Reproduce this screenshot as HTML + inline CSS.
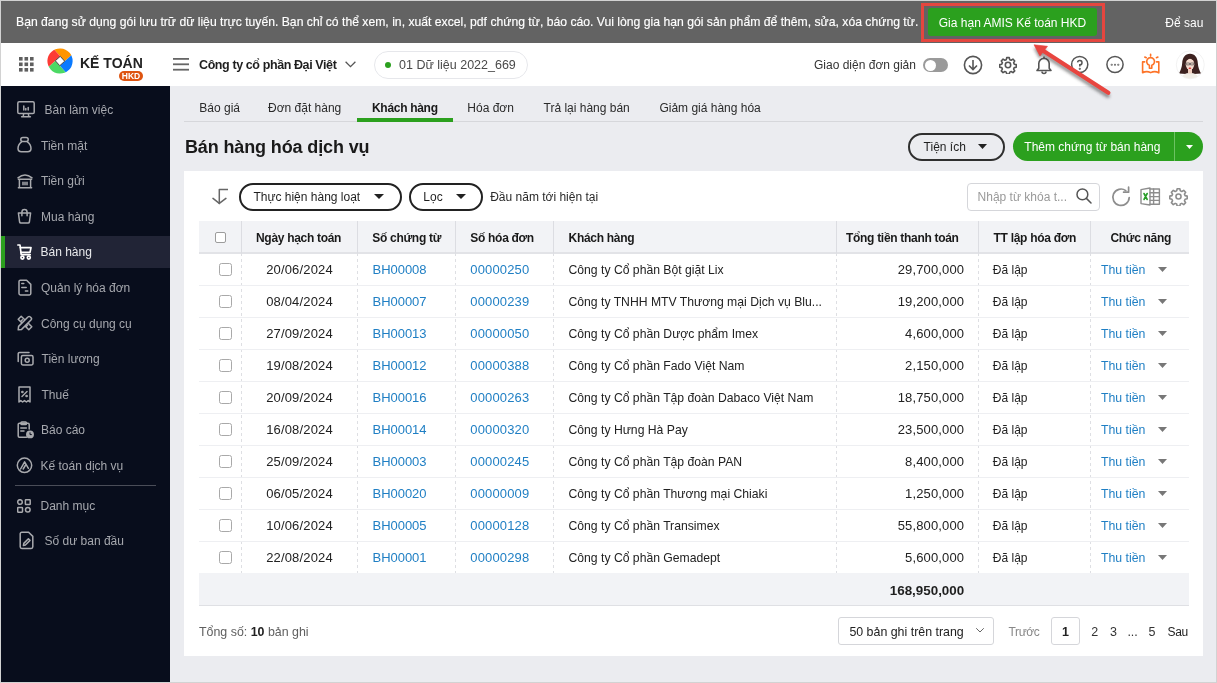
<!DOCTYPE html>
<html><head><meta charset="utf-8">
<style>
*{box-sizing:border-box;margin:0;padding:0}
html,body{width:1217px;height:683px;overflow:hidden;background:#ebecf0;font-family:"Liberation Sans",sans-serif;position:relative}
#root{position:absolute;left:0;top:0;width:1217px;height:683px;will-change:transform}
.a{position:absolute;white-space:nowrap;line-height:normal}
</style></head>
<body><div id="root">
<div class="a" style="left:0px;top:0px;width:1217px;height:43px;background:#636363"></div>
<div class="a" style="left:16px;top:15px;font-size:12.2px;color:#fff;-webkit-text-stroke:0.15px #fff">Bạn đang sử dụng gói lưu trữ dữ liệu trực tuyến. Bạn chỉ có thể xem, in, xuất excel, pdf chứng từ, báo cáo. Vui lòng gia hạn gói sản phẩm để thêm, sửa, xóa chứng từ.</div>
<div class="a" style="left:928px;top:8px;width:169px;height:28px;background:#2ba01e;border-radius:3px"></div>
<div class="a" style="left:862.5px;width:300px;text-align:center;top:15.5px;font-size:12px;color:#fff;">Gia hạn AMIS Kế toán HKD</div>
<div class="a" style="left:1165.3px;top:16px;font-size:12px;color:#fff;">Để sau</div>
<div class="a" style="left:921px;top:3px;width:184px;height:39px;border:3px solid #e5463f;z-index:20"></div>
<div class="a" style="left:0px;top:43px;width:1217px;height:43px;background:#fff"></div>
<svg class="a" style="left:19px;top:57px" width="15" height="15" viewBox="0 0 15 15" fill="#5f5f5f"><rect x="0" y="0" width="3.6" height="3.6"/><rect x="5.5" y="0" width="3.6" height="3.6"/><rect x="11" y="0" width="3.6" height="3.6"/><rect x="0" y="5.5" width="3.6" height="3.6"/><rect x="5.5" y="5.5" width="3.6" height="3.6"/><rect x="11" y="5.5" width="3.6" height="3.6"/><rect x="0" y="11" width="3.6" height="3.6"/><rect x="5.5" y="11" width="3.6" height="3.6"/><rect x="11" y="11" width="3.6" height="3.6"/></svg>
<svg class="a" style="left:47px;top:48px" width="26" height="26" viewBox="-13 -13 26 26">
    <defs><clipPath id="lc"><circle cx="0" cy="0" r="12.6"/></clipPath></defs>
    <g clip-path="url(#lc)" transform="rotate(3)">
      <path d="M0 -4.7 L-40 -44.7 L44.7 -40 L4.7 0 Z" fill="#ff9500"/>
      <path d="M4.7 0 L44.7 -40 L40 44.7 L0 4.7 Z" fill="#0a7aff"/>
      <path d="M0 4.7 L40 44.7 L-44.7 40 L-4.7 0 Z" fill="#4cd964"/>
      <path d="M-4.7 0 L-44.7 40 L-40 -44.7 L0 -4.7 Z" fill="#fd3b35"/>
      <path d="M0 -4.7 L4.7 0 L0 4.7 L-4.7 0 Z" fill="#fff" stroke="#333" stroke-width="0.9"/>
    </g></svg>
<div class="a" style="left:80px;top:55px;font-size:14px;color:#222;font-weight:bold;">KẾ TOÁN</div>
<div class="a" style="left:119px;top:71px;width:24px;height:9.5px;border-radius:5px;background:#de5410"></div>
<div class="a" style="left:-19px;width:300px;text-align:center;top:71px;font-size:8.5px;color:#fff;font-weight:bold;">HKD</div>
<svg class="a" style="left:173px;top:58px" width="16" height="13" viewBox="0 0 16 13" fill="#666"><rect x="0" y="0" width="16" height="1.8"/><rect x="0" y="5.4" width="16" height="1.8"/><rect x="0" y="10.8" width="16" height="1.8"/></svg>
<div class="a" style="left:199px;top:58px;font-size:12.5px;color:#1f1f1f;font-weight:bold;letter-spacing:-0.4px">Công ty cổ phần Đại Việt</div>
<svg class="a" style="left:345px;top:61px" width="11" height="7" viewBox="0 0 11 7"><path d="M0.6 0.8 L5.5 5.6 L10.4 0.8" fill="none" stroke="#555" stroke-width="1.3"/></svg>
<div class="a" style="left:373.5px;top:50.5px;width:154.5px;height:28px;border:1px solid #e6e7eb;border-radius:14px"></div>
<div class="a" style="left:384.7px;top:62px;width:6px;height:6px;border-radius:50%;background:#2ba01e"></div>
<div class="a" style="left:399px;top:58px;font-size:12.5px;color:#4a4a4a;">01 Dữ liệu 2022_669</div>
<div class="a" style="left:814px;top:58px;font-size:12px;color:#333;">Giao diện đơn giản</div>
<div class="a" style="left:923px;top:58px;width:25px;height:14px;border-radius:7px;background:#9a9a9a"></div>
<div class="a" style="left:924.5px;top:59.5px;width:11px;height:11px;border-radius:50%;background:#fff"></div>
<svg class="a" style="left:963px;top:55px" width="20" height="20" viewBox="0 0 20 20" fill="none" stroke="#555" stroke-width="1.6"><circle cx="10" cy="10" r="8.6"/><path d="M10 5 V14.5 M6 10.5 L10 14.5 L14 10.5"/></svg>
<svg class="a" style="left:999px;top:56px" width="18" height="18" viewBox="0 0 24 24" fill="none" stroke="#555" stroke-width="2.1" stroke-linejoin="round"><path d="M10.3 2.2h3.4l.6 2.7 1.9.8 2.4-1.5 2.4 2.4-1.5 2.4.8 1.9 2.7.6v3.4l-2.7.6-.8 1.9 1.5 2.4-2.4 2.4-2.4-1.5-1.9.8-.6 2.7h-3.4l-.6-2.7-1.9-.8-2.4 1.5-2.4-2.4 1.5-2.4-.8-1.9-2.7-.6v-3.4l2.7-.6.8-1.9-1.5-2.4 2.4-2.4 2.4 1.5 1.9-.8z"/><circle cx="12" cy="12" r="3.6"/></svg>
<svg class="a" style="left:1034px;top:55px" width="20" height="20" viewBox="0 0 20 20" fill="none" stroke="#555" stroke-width="1.6" stroke-linejoin="round"><path d="M3 15.5 H17 L15.2 13.2 V8.6 A5.2 5.2 0 0 0 4.8 8.6 V13.2 Z"/><path d="M8 16.5 A2 2 0 0 0 12 16.5"/><path d="M10 1.5 V3.4"/></svg>
<svg class="a" style="left:1070px;top:55px" width="20" height="20" viewBox="0 0 20 20" fill="none" stroke="#555" stroke-width="1.5"><circle cx="9.7" cy="9.5" r="8.1"/><path d="M7.6 7.4 A2.2 2.2 0 1 1 9.8 9.8 V11.4"/><circle cx="9.8" cy="13.8" r="0.35" fill="#555"/></svg>
<svg class="a" style="left:1105px;top:55px" width="20" height="20" viewBox="0 0 20 20" fill="none" stroke="#555" stroke-width="1.5"><circle cx="10" cy="9.5" r="8.1"/><circle cx="6.7" cy="9.8" r="0.3" fill="#555"/><circle cx="10" cy="9.8" r="0.3" fill="#555"/><circle cx="13.3" cy="9.8" r="0.3" fill="#555"/></svg>
<svg class="a" style="left:1141px;top:53px" width="20" height="22" viewBox="0 0 20 22" fill="none" stroke="#fd7328" stroke-width="1.6" stroke-linejoin="round" stroke-linecap="round">
    <path d="M3.6 8.9 H1.6 V19.8 Q5.6 17.6 9.7 19.6 Q13.8 17.6 17.8 19.8 V8.9 H15.6"/>
    <path d="M8.4 15.2 V12.2 A3.9 3.9 0 1 1 10.8 12.2 V15.2 Z"/><path d="M9.6 1.2 V3.1 M3.8 4 L5.3 4.7 M15.4 4.7 L16.9 4"/></svg>
<svg class="a" style="left:1175px;top:50px" width="30" height="30" viewBox="0 0 30 30">
    <defs><clipPath id="av"><circle cx="15.3" cy="14.8" r="13.8"/></clipPath></defs>
    <circle cx="15.3" cy="14.8" r="14" fill="#fff" stroke="#efefef" stroke-width="0.8"/>
    <g clip-path="url(#av)">
      <path d="M15 3.8 C20 3.8 22.6 8 22.8 13 C23 17 24.5 20.5 26 23.5 L19 24 L11 24 L4 23.5 C5.5 20.5 7 17 7.2 13 C7.5 8 10 3.8 15 3.8 Z" fill="#3d2220"/>
      <path d="M5 31 C6 25.5 10 23 15 23 C20 23 24 25.5 25 31 Z" fill="#f1ede6"/>
      <rect x="13" y="18.5" width="4" height="5" fill="#efcfc0"/>
      <ellipse cx="15" cy="14.3" rx="4.3" ry="5.6" fill="#f4dacd"/>
      <path d="M15 6.5 C12 6.8 10.6 9.5 10.7 11.5 C12 9.8 13.8 8.6 15 7.6 C16.2 8.6 18 9.8 19.3 11.5 C19.4 9.5 18 6.8 15 6.5 Z" fill="#3d2220"/>
      <path d="M10.9 13 H14.5 V14.9 H11.3 Z M15.5 13 H19.1 L18.7 14.9 H15.5 Z" fill="none" stroke="#4a4a4a" stroke-width="0.7"/>
      <ellipse cx="14.9" cy="18.3" rx="1.4" ry="0.7" fill="#d62b2b"/>
    </g></svg>
<div class="a" style="left:0px;top:86px;width:170px;height:597px;background:#080d1c"></div>
<svg class="a" style="left:17px;top:101px;" width="18" height="17" viewBox="0 0 18 17" fill="none" stroke="#a9aaae" stroke-width="1.5" stroke-linecap="round" stroke-linejoin="round"><rect x="0.8" y="0.8" width="16.4" height="11.8" rx="1.4"/><path d="M6.6 13 L6.2 15.6 M11.4 13 L11.8 15.6 M4.6 15.8 H13.4"/><path d="M6.8 5 V9 M8.8 7.4 V9 M11.2 6.4 V9" stroke-width="1.5"/></svg>
<div class="a" style="left:44.5px;top:103px;font-size:12px;color:#a6a8ae;">Bàn làm việc</div>
<svg class="a" style="left:17px;top:136px;" width="15" height="17" viewBox="0 0 15 17" fill="none" stroke="#a9aaae" stroke-width="1.5" stroke-linecap="round" stroke-linejoin="round"><rect x="3.8" y="1.4" width="7.4" height="4.2" rx="2.1"/><path d="M4.6 5.8 C2 7.6 1 10.2 1 12.6 C1 14.9 2.4 15.8 4.4 15.8 H10.6 C12.6 15.8 14 14.9 14 12.6 C14 10.2 13 7.6 10.4 5.8"/></svg>
<div class="a" style="left:41px;top:139px;font-size:12px;color:#a6a8ae;">Tiền mặt</div>
<svg class="a" style="left:17px;top:172px;" width="16" height="17" viewBox="0 0 16 17" fill="none" stroke="#a9aaae" stroke-width="1.5" stroke-linecap="round" stroke-linejoin="round"><path d="M1 5.8 Q8 0.4 15 5.8"/><path d="M1.4 7.2 H14.6 M1.4 15.8 H14.6 M2.4 7.2 V15.8 M13.6 7.2 V15.8 M6 10.2 V12.8 M8 10.2 V12.8 M10 10.2 V12.8"/></svg>
<div class="a" style="left:41px;top:174px;font-size:12px;color:#a6a8ae;">Tiền gửi</div>
<svg class="a" style="left:17px;top:208px;" width="15" height="16" viewBox="0 0 15 16" fill="none" stroke="#a9aaae" stroke-width="1.5" stroke-linecap="round" stroke-linejoin="round"><path d="M1.4 5 H13.6 L12.4 14 Q12.2 15 11.1 15 H3.9 Q2.8 15 2.6 14 Z"/><path d="M4.9 7.8 V4.2 A2.6 2.6 0 0 1 10.1 4.2 V7.8"/></svg>
<div class="a" style="left:41px;top:210px;font-size:12px;color:#a6a8ae;">Mua hàng</div>
<div class="a" style="left:1px;top:236px;width:169px;height:32px;background:#212436"></div>
<div class="a" style="left:1px;top:236px;width:4px;height:32px;background:#2ba01e"></div>
<svg class="a" style="left:17px;top:244px;" width="15" height="16" viewBox="0 0 15 16" fill="none" stroke="#fff" stroke-width="1.7" stroke-linecap="round" stroke-linejoin="round"><path d="M0.8 1 H3 L4.2 10.6 H13.2"/><path d="M3.4 3.6 H14 L13 8.4 H4"/><circle cx="5.4" cy="13.6" r="1.5"/><circle cx="11.8" cy="13.6" r="1.5"/></svg>
<div class="a" style="left:40.5px;top:245px;font-size:12px;color:#e8e9ec;">Bán hàng</div>
<svg class="a" style="left:18px;top:279px;" width="14" height="17" viewBox="0 0 14 17" fill="none" stroke="#a9aaae" stroke-width="1.5" stroke-linecap="round" stroke-linejoin="round"><path d="M2.4 1.2 H8.6 L12.8 5.4 V14.6 A1.4 1.4 0 0 1 11.4 16 H2.4 A1.4 1.4 0 0 1 1 14.6 V2.6 A1.4 1.4 0 0 1 2.4 1.2 Z"/><path d="M3.8 4.6 H5.8 M3.8 8.6 H8.2 M7.4 12 H9.8"/></svg>
<div class="a" style="left:41px;top:281px;font-size:12px;color:#a6a8ae;">Quản lý hóa đơn</div>
<svg class="a" style="left:17px;top:315px;" width="16" height="16" viewBox="0 0 16 16" fill="none" stroke="#a9aaae" stroke-width="1.5" stroke-linecap="round" stroke-linejoin="round"><path d="M4.2 1.2 L1.2 4.2 L11.8 14.8 L14.8 11.8 Z"/><path d="M4 6.2 L5.4 4.8 M9.2 11.4 L10.6 10"/><path d="M1.2 14.8 L1.6 11.4 L11.2 1.8 A1.3 1.3 0 0 1 13.1 1.8 L14.2 2.9 A1.3 1.3 0 0 1 14.2 4.8 L4.6 14.4 Z" fill="#080d1c"/></svg>
<div class="a" style="left:41px;top:317px;font-size:12px;color:#a6a8ae;">Công cụ dụng cụ</div>
<svg class="a" style="left:17px;top:351px;" width="17" height="15" viewBox="0 0 17 15" fill="none" stroke="#a9aaae" stroke-width="1.5" stroke-linecap="round" stroke-linejoin="round"><rect x="4.4" y="4.6" width="11.6" height="9.4" rx="1.4"/><path d="M1.2 10.6 V2.8 A1.4 1.4 0 0 1 2.6 1.4 H12"/><circle cx="10.2" cy="9.3" r="2"/></svg>
<div class="a" style="left:41.5px;top:352px;font-size:12px;color:#a6a8ae;">Tiền lương</div>
<svg class="a" style="left:18px;top:386px;" width="13" height="17" viewBox="0 0 13 17" fill="none" stroke="#a9aaae" stroke-width="1.5" stroke-linecap="round" stroke-linejoin="round"><path d="M1 1 H12 V16 L10.2 14.6 L8.4 16 L6.5 14.6 L4.6 16 L2.8 14.6 L1 16 Z"/><path d="M4 10.5 L9 5.5"/><circle cx="4.4" cy="6" r="0.6"/><circle cx="8.6" cy="10" r="0.6"/></svg>
<div class="a" style="left:41.5px;top:388px;font-size:12px;color:#a6a8ae;">Thuế</div>
<svg class="a" style="left:17px;top:421px;" width="17" height="18" viewBox="0 0 17 18" fill="none" stroke="#a9aaae" stroke-width="1.5" stroke-linecap="round" stroke-linejoin="round"><path d="M9.5 16.2 H2.4 A1.2 1.2 0 0 1 1.2 15 V3.4 A1.2 1.2 0 0 1 2.4 2.2 H11 A1.2 1.2 0 0 1 12.2 3.4 V8"/><rect x="4" y="0.9" width="5.4" height="2.6" rx="0.8"/><path d="M3.8 7 H9.4 M3.8 10 H7"/><circle cx="13" cy="13.4" r="3.2" fill="#a9aaae"/><path d="M13 11.8 V13.6 H14.4" stroke="#080d1c" stroke-width="1"/></svg>
<div class="a" style="left:41px;top:423px;font-size:12px;color:#a6a8ae;">Báo cáo</div>
<svg class="a" style="left:16px;top:457px;" width="17" height="17" viewBox="0 0 17 17" fill="none" stroke="#a9aaae" stroke-width="1.5" stroke-linecap="round" stroke-linejoin="round"><circle cx="8.5" cy="8.3" r="7.2"/><path d="M4.6 12 L8.6 4.8 L12.4 11.4 M7.2 12 L9.6 8"/></svg>
<div class="a" style="left:40.5px;top:459px;font-size:12px;color:#a6a8ae;">Kế toán dịch vụ</div>
<svg class="a" style="left:17px;top:499px;" width="14" height="14" viewBox="0 0 14 14" fill="none" stroke="#a9aaae" stroke-width="1.5" stroke-linecap="round" stroke-linejoin="round"><circle cx="3" cy="3" r="2.3"/><rect x="8.4" y="0.7" width="4.8" height="4.8" rx="0.6"/><rect x="0.7" y="8.4" width="4.8" height="4.8" rx="0.6"/><circle cx="10.8" cy="10.8" r="2.3"/></svg>
<div class="a" style="left:40.5px;top:499px;font-size:12px;color:#a6a8ae;">Danh mục</div>
<svg class="a" style="left:19px;top:531px;" width="15" height="19" viewBox="0 0 15 19" fill="none" stroke="#a9aaae" stroke-width="1.5" stroke-linecap="round" stroke-linejoin="round"><path d="M2.8 1.2 H9.6 L13.8 5.4 V15.8 A1.6 1.6 0 0 1 12.2 17.4 H2.8 A1.6 1.6 0 0 1 1.2 15.8 V2.8 A1.6 1.6 0 0 1 2.8 1.2 Z"/><path d="M4.4 14.6 L4.8 12.4 L9.4 7.8 L11 9.4 L6.4 14 Z"/></svg>
<div class="a" style="left:44.5px;top:534px;font-size:12px;color:#a6a8ae;">Số dư ban đầu</div>
<div class="a" style="left:15px;top:485px;width:141px;height:1px;background:#4a4d58"></div>
<div class="a" style="left:184px;top:121px;width:1019px;height:1px;background:#d6d7db"></div>
<div class="a" style="left:357px;top:118px;width:96px;height:3.6px;background:#2ba01e"></div>
<div class="a" style="left:199.3px;top:101px;font-size:12px;color:#2a2a2a;">Báo giá</div>
<div class="a" style="left:268px;top:101px;font-size:12px;color:#2a2a2a;">Đơn đặt hàng</div>
<div class="a" style="left:372px;top:101px;font-size:12px;color:#1a1a1a;font-weight:bold;letter-spacing:-0.3px">Khách hàng</div>
<div class="a" style="left:467.3px;top:101px;font-size:12px;color:#2a2a2a;">Hóa đơn</div>
<div class="a" style="left:543.5px;top:101px;font-size:12px;color:#2a2a2a;">Trả lại hàng bán</div>
<div class="a" style="left:659.4px;top:101px;font-size:12px;color:#2a2a2a;">Giảm giá hàng hóa</div>
<div class="a" style="left:185px;top:137px;font-size:18px;color:#1a1a1a;font-weight:bold;letter-spacing:-0.13px">Bán hàng hóa dịch vụ</div>
<div class="a" style="left:908px;top:133px;width:97px;height:28px;border:2px solid #2f2f2f;border-radius:14px"></div>
<div class="a" style="left:923.6px;top:140px;font-size:12px;color:#1f1f1f;">Tiện ích</div>
<svg class="a" style="left:978px;top:144px;" width="9" height="5" viewBox="0 0 9 5" fill="#222" stroke="none" stroke-width="1.5" stroke-linecap="round" stroke-linejoin="round"><path d="M0 0 H9 L4.5 5 Z"/></svg>
<div class="a" style="left:1013px;top:132px;width:190px;height:29px;background:#2ba01e;border-radius:15px"></div>
<div class="a" style="left:1174px;top:132px;width:1px;height:29px;background:#6cc262"></div>
<div class="a" style="left:1024.3px;top:140px;font-size:12px;color:#fff;">Thêm chứng từ bán hàng</div>
<svg class="a" style="left:1185.5px;top:145px;" width="7" height="4" viewBox="0 0 7 4" fill="#fff" stroke="none" stroke-width="1.5" stroke-linecap="round" stroke-linejoin="round"><path d="M0 0 H7 L3.5 4 Z"/></svg>
<div class="a" style="left:184px;top:171px;width:1019px;height:485px;background:#fff"></div>
<svg class="a" style="left:212px;top:188px;" width="16" height="17" viewBox="0 0 16 17" fill="none" stroke="#666" stroke-width="1.5" stroke-linecap="round" stroke-linejoin="round"><path d="M7.3 15.4 V1.5 H15.8"/><path d="M1 10.4 L7.3 15.4 L13.9 10.4"/></svg>
<div class="a" style="left:238.5px;top:182.5px;width:163px;height:28px;border:2px solid #222;border-radius:14px"></div>
<div class="a" style="left:253.4px;top:190px;font-size:12px;color:#1f1f1f;">Thực hiện hàng loạt</div>
<svg class="a" style="left:374px;top:194px;" width="10" height="5" viewBox="0 0 10 5" fill="#222" stroke="none" stroke-width="1.5" stroke-linecap="round" stroke-linejoin="round"><path d="M0 0 H10 L5 5 Z"/></svg>
<div class="a" style="left:409px;top:182.5px;width:73.5px;height:28px;border:2px solid #222;border-radius:14px"></div>
<div class="a" style="left:423.3px;top:190px;font-size:12px;color:#1f1f1f;">Lọc</div>
<svg class="a" style="left:455.5px;top:194px;" width="10" height="5" viewBox="0 0 10 5" fill="#222" stroke="none" stroke-width="1.5" stroke-linecap="round" stroke-linejoin="round"><path d="M0 0 H10 L5 5 Z"/></svg>
<div class="a" style="left:490.2px;top:190px;font-size:12px;color:#2a2a2a;">Đầu năm tới hiện tại</div>
<div class="a" style="left:967px;top:182.5px;width:133px;height:28.5px;border:1px solid #d5d6da;border-radius:4px"></div>
<div class="a" style="left:977.6px;top:190px;font-size:12px;color:#9a9a9a;">Nhập từ khóa t...</div>
<svg class="a" style="left:1076px;top:188px;" width="16" height="16" viewBox="0 0 16 16" fill="none" stroke="#555" stroke-width="1.5" stroke-linecap="round" stroke-linejoin="round"><circle cx="6.4" cy="6.4" r="5.4"/><path d="M10.4 10.4 L15 15"/></svg>
<svg class="a" style="left:1110px;top:186px;" width="22" height="22" viewBox="0 0 22 22" fill="none" stroke="#8d8d8d" stroke-width="1.7" stroke-linecap="round" stroke-linejoin="round"><path d="M19.2 11.5 A8.2 8.2 0 1 1 15.8 4.6"/><path d="M18.6 1.2 V6.2 H13.6"/></svg>
<svg class="a" style="left:1140px;top:187px;" width="21" height="19" viewBox="0 0 21 19" fill="none" stroke="#8d8d8d" stroke-width="1.4" stroke-linecap="round" stroke-linejoin="round"><path d="M1 2.6 L10 1 V18 L1 16.6 Z"/><path d="M10 2 H19.4 V17.2 H10"/><path d="M10 5.8 H19.4 M10 9.6 H19.4 M10 13.4 H19.4 M13.6 2 V17.2"/><path d="M4 6.5 L7.2 12.5 M7.2 6.5 L4 12.5" stroke="#2a9d2a" stroke-width="1.6"/></svg>
<svg class="a" style="left:1169px;top:187px;" width="19" height="19" viewBox="0 0 24 24" fill="none" stroke="#8d8d8d" stroke-width="2" stroke-linecap="round" stroke-linejoin="round"><path d="M10.3 2.2h3.4l.6 2.7 1.9.8 2.4-1.5 2.4 2.4-1.5 2.4.8 1.9 2.7.6v3.4l-2.7.6-.8 1.9 1.5 2.4-2.4 2.4-2.4-1.5-1.9.8-.6 2.7h-3.4l-.6-2.7-1.9-.8-2.4 1.5-2.4-2.4 1.5-2.4-.8-1.9-2.7-.6v-3.4l2.7-.6.8-1.9-1.5-2.4 2.4-2.4 2.4 1.5 1.9-.8z"/><circle cx="12" cy="12" r="3.2"/></svg>
<div class="a" style="left:199px;top:221px;width:990px;height:32px;background:#f2f3f6"></div>
<div class="a" style="left:199px;top:252px;width:990px;height:1.5px;background:#e2e3e7"></div>
<div class="a" style="left:241.0px;top:221px;width:1px;height:32px;background:#dcdde2"></div>
<div class="a" style="left:241.0px;top:253px;width:1px;height:320px;background-image:linear-gradient(#dedfe3 55%,transparent 55%);background-size:1px 6px"></div>
<div class="a" style="left:357.0px;top:221px;width:1px;height:32px;background:#dcdde2"></div>
<div class="a" style="left:357.0px;top:253px;width:1px;height:320px;background-image:linear-gradient(#dedfe3 55%,transparent 55%);background-size:1px 6px"></div>
<div class="a" style="left:455.0px;top:221px;width:1px;height:32px;background:#dcdde2"></div>
<div class="a" style="left:455.0px;top:253px;width:1px;height:320px;background-image:linear-gradient(#dedfe3 55%,transparent 55%);background-size:1px 6px"></div>
<div class="a" style="left:553.0px;top:221px;width:1px;height:32px;background:#dcdde2"></div>
<div class="a" style="left:553.0px;top:253px;width:1px;height:320px;background-image:linear-gradient(#dedfe3 55%,transparent 55%);background-size:1px 6px"></div>
<div class="a" style="left:835.8px;top:221px;width:1px;height:32px;background:#dcdde2"></div>
<div class="a" style="left:835.8px;top:253px;width:1px;height:320px;background-image:linear-gradient(#dedfe3 55%,transparent 55%);background-size:1px 6px"></div>
<div class="a" style="left:978.2px;top:221px;width:1px;height:32px;background:#dcdde2"></div>
<div class="a" style="left:978.2px;top:253px;width:1px;height:320px;background-image:linear-gradient(#dedfe3 55%,transparent 55%);background-size:1px 6px"></div>
<div class="a" style="left:1090.3px;top:221px;width:1px;height:32px;background:#dcdde2"></div>
<div class="a" style="left:1090.3px;top:253px;width:1px;height:320px;background-image:linear-gradient(#dedfe3 55%,transparent 55%);background-size:1px 6px"></div>
<div class="a" style="left:215px;top:232px;width:11px;height:11px;border:1px solid #9c9c9c;border-radius:2px;background:#fff"></div>
<div class="a" style="left:256px;top:231px;font-size:12px;color:#1a1a1a;font-weight:bold;letter-spacing:-0.3px">Ngày hạch toán</div>
<div class="a" style="left:372.3px;top:231px;font-size:12px;color:#1a1a1a;font-weight:bold;letter-spacing:-0.3px">Số chứng từ</div>
<div class="a" style="left:470.3px;top:231px;font-size:12px;color:#1a1a1a;font-weight:bold;letter-spacing:-0.3px">Số hóa đơn</div>
<div class="a" style="left:568.6px;top:231px;font-size:12px;color:#1a1a1a;font-weight:bold;letter-spacing:-0.3px">Khách hàng</div>
<div class="a" style="left:846px;top:231px;font-size:12px;color:#1a1a1a;font-weight:bold;letter-spacing:-0.3px">Tổng tiền thanh toán</div>
<div class="a" style="left:993.6px;top:231px;font-size:12px;color:#1a1a1a;font-weight:bold;letter-spacing:-0.3px">TT lập hóa đơn</div>
<div class="a" style="left:1110.4px;top:231px;font-size:12px;color:#1a1a1a;font-weight:bold;letter-spacing:-0.3px">Chức năng</div>
<div class="a" style="left:199px;top:284.5px;width:990px;height:1px;background:#eeeff2"></div>
<div class="a" style="left:219px;top:263px;width:13px;height:13px;border:1.5px solid #a9a9a9;border-radius:2.5px"></div>
<div class="a" style="left:149.5px;width:300px;text-align:center;top:262px;font-size:13px;color:#222;letter-spacing:0.15px">20/06/2024</div>
<div class="a" style="left:372.6px;top:262px;font-size:13px;color:#1f7fc4;letter-spacing:-0.05px">BH00008</div>
<div class="a" style="left:470.3px;top:262px;font-size:13px;color:#1f7fc4;letter-spacing:0.15px">00000250</div>
<div class="a" style="left:568.5px;top:263px;font-size:12.2px;color:#222;">Công ty Cổ phần Bột giặt Lix</div>
<div class="a" style="right:252.79999999999995px;top:262px;font-size:13px;color:#222;letter-spacing:0.15px">29,700,000</div>
<div class="a" style="left:992.8px;top:263px;font-size:12px;color:#222;">Đã lập</div>
<div class="a" style="left:1100.9px;top:263px;font-size:12.3px;color:#1f7fc4;">Thu tiền</div>
<svg class="a" style="left:1158px;top:267px;" width="9" height="5" viewBox="0 0 9 5" fill="#777" stroke="none" stroke-width="1.5" stroke-linecap="round" stroke-linejoin="round"><path d="M0 0 H9 L4.5 5 Z"/></svg>
<div class="a" style="left:199px;top:316.5px;width:990px;height:1px;background:#eeeff2"></div>
<div class="a" style="left:219px;top:295px;width:13px;height:13px;border:1.5px solid #a9a9a9;border-radius:2.5px"></div>
<div class="a" style="left:149.5px;width:300px;text-align:center;top:294px;font-size:13px;color:#222;letter-spacing:0.15px">08/04/2024</div>
<div class="a" style="left:372.6px;top:294px;font-size:13px;color:#1f7fc4;letter-spacing:-0.05px">BH00007</div>
<div class="a" style="left:470.3px;top:294px;font-size:13px;color:#1f7fc4;letter-spacing:0.15px">00000239</div>
<div class="a" style="left:568.5px;top:295px;font-size:12.2px;color:#222;">Công ty TNHH MTV Thương mại Dịch vụ Blu...</div>
<div class="a" style="right:252.79999999999995px;top:294px;font-size:13px;color:#222;letter-spacing:0.15px">19,200,000</div>
<div class="a" style="left:992.8px;top:295px;font-size:12px;color:#222;">Đã lập</div>
<div class="a" style="left:1100.9px;top:295px;font-size:12.3px;color:#1f7fc4;">Thu tiền</div>
<svg class="a" style="left:1158px;top:299px;" width="9" height="5" viewBox="0 0 9 5" fill="#777" stroke="none" stroke-width="1.5" stroke-linecap="round" stroke-linejoin="round"><path d="M0 0 H9 L4.5 5 Z"/></svg>
<div class="a" style="left:199px;top:348.5px;width:990px;height:1px;background:#eeeff2"></div>
<div class="a" style="left:219px;top:327px;width:13px;height:13px;border:1.5px solid #a9a9a9;border-radius:2.5px"></div>
<div class="a" style="left:149.5px;width:300px;text-align:center;top:326px;font-size:13px;color:#222;letter-spacing:0.15px">27/09/2024</div>
<div class="a" style="left:372.6px;top:326px;font-size:13px;color:#1f7fc4;letter-spacing:-0.05px">BH00013</div>
<div class="a" style="left:470.3px;top:326px;font-size:13px;color:#1f7fc4;letter-spacing:0.15px">00000050</div>
<div class="a" style="left:568.5px;top:327px;font-size:12.2px;color:#222;">Công ty Cổ phần Dược phẩm Imex</div>
<div class="a" style="right:252.79999999999995px;top:326px;font-size:13px;color:#222;letter-spacing:0.15px">4,600,000</div>
<div class="a" style="left:992.8px;top:327px;font-size:12px;color:#222;">Đã lập</div>
<div class="a" style="left:1100.9px;top:327px;font-size:12.3px;color:#1f7fc4;">Thu tiền</div>
<svg class="a" style="left:1158px;top:331px;" width="9" height="5" viewBox="0 0 9 5" fill="#777" stroke="none" stroke-width="1.5" stroke-linecap="round" stroke-linejoin="round"><path d="M0 0 H9 L4.5 5 Z"/></svg>
<div class="a" style="left:199px;top:380.5px;width:990px;height:1px;background:#eeeff2"></div>
<div class="a" style="left:219px;top:359px;width:13px;height:13px;border:1.5px solid #a9a9a9;border-radius:2.5px"></div>
<div class="a" style="left:149.5px;width:300px;text-align:center;top:358px;font-size:13px;color:#222;letter-spacing:0.15px">19/08/2024</div>
<div class="a" style="left:372.6px;top:358px;font-size:13px;color:#1f7fc4;letter-spacing:-0.05px">BH00012</div>
<div class="a" style="left:470.3px;top:358px;font-size:13px;color:#1f7fc4;letter-spacing:0.15px">00000388</div>
<div class="a" style="left:568.5px;top:359px;font-size:12.2px;color:#222;">Công ty Cổ phần Fado Việt Nam</div>
<div class="a" style="right:252.79999999999995px;top:358px;font-size:13px;color:#222;letter-spacing:0.15px">2,150,000</div>
<div class="a" style="left:992.8px;top:359px;font-size:12px;color:#222;">Đã lập</div>
<div class="a" style="left:1100.9px;top:359px;font-size:12.3px;color:#1f7fc4;">Thu tiền</div>
<svg class="a" style="left:1158px;top:363px;" width="9" height="5" viewBox="0 0 9 5" fill="#777" stroke="none" stroke-width="1.5" stroke-linecap="round" stroke-linejoin="round"><path d="M0 0 H9 L4.5 5 Z"/></svg>
<div class="a" style="left:199px;top:412.5px;width:990px;height:1px;background:#eeeff2"></div>
<div class="a" style="left:219px;top:391px;width:13px;height:13px;border:1.5px solid #a9a9a9;border-radius:2.5px"></div>
<div class="a" style="left:149.5px;width:300px;text-align:center;top:390px;font-size:13px;color:#222;letter-spacing:0.15px">20/09/2024</div>
<div class="a" style="left:372.6px;top:390px;font-size:13px;color:#1f7fc4;letter-spacing:-0.05px">BH00016</div>
<div class="a" style="left:470.3px;top:390px;font-size:13px;color:#1f7fc4;letter-spacing:0.15px">00000263</div>
<div class="a" style="left:568.5px;top:391px;font-size:12.2px;color:#222;">Công ty Cổ phần Tập đoàn Dabaco Việt Nam</div>
<div class="a" style="right:252.79999999999995px;top:390px;font-size:13px;color:#222;letter-spacing:0.15px">18,750,000</div>
<div class="a" style="left:992.8px;top:391px;font-size:12px;color:#222;">Đã lập</div>
<div class="a" style="left:1100.9px;top:391px;font-size:12.3px;color:#1f7fc4;">Thu tiền</div>
<svg class="a" style="left:1158px;top:395px;" width="9" height="5" viewBox="0 0 9 5" fill="#777" stroke="none" stroke-width="1.5" stroke-linecap="round" stroke-linejoin="round"><path d="M0 0 H9 L4.5 5 Z"/></svg>
<div class="a" style="left:199px;top:444.5px;width:990px;height:1px;background:#eeeff2"></div>
<div class="a" style="left:219px;top:423px;width:13px;height:13px;border:1.5px solid #a9a9a9;border-radius:2.5px"></div>
<div class="a" style="left:149.5px;width:300px;text-align:center;top:422px;font-size:13px;color:#222;letter-spacing:0.15px">16/08/2024</div>
<div class="a" style="left:372.6px;top:422px;font-size:13px;color:#1f7fc4;letter-spacing:-0.05px">BH00014</div>
<div class="a" style="left:470.3px;top:422px;font-size:13px;color:#1f7fc4;letter-spacing:0.15px">00000320</div>
<div class="a" style="left:568.5px;top:423px;font-size:12.2px;color:#222;">Công ty Hưng Hà Pay</div>
<div class="a" style="right:252.79999999999995px;top:422px;font-size:13px;color:#222;letter-spacing:0.15px">23,500,000</div>
<div class="a" style="left:992.8px;top:423px;font-size:12px;color:#222;">Đã lập</div>
<div class="a" style="left:1100.9px;top:423px;font-size:12.3px;color:#1f7fc4;">Thu tiền</div>
<svg class="a" style="left:1158px;top:427px;" width="9" height="5" viewBox="0 0 9 5" fill="#777" stroke="none" stroke-width="1.5" stroke-linecap="round" stroke-linejoin="round"><path d="M0 0 H9 L4.5 5 Z"/></svg>
<div class="a" style="left:199px;top:476.5px;width:990px;height:1px;background:#eeeff2"></div>
<div class="a" style="left:219px;top:455px;width:13px;height:13px;border:1.5px solid #a9a9a9;border-radius:2.5px"></div>
<div class="a" style="left:149.5px;width:300px;text-align:center;top:454px;font-size:13px;color:#222;letter-spacing:0.15px">25/09/2024</div>
<div class="a" style="left:372.6px;top:454px;font-size:13px;color:#1f7fc4;letter-spacing:-0.05px">BH00003</div>
<div class="a" style="left:470.3px;top:454px;font-size:13px;color:#1f7fc4;letter-spacing:0.15px">00000245</div>
<div class="a" style="left:568.5px;top:455px;font-size:12.2px;color:#222;">Công ty Cổ phần Tập đoàn PAN</div>
<div class="a" style="right:252.79999999999995px;top:454px;font-size:13px;color:#222;letter-spacing:0.15px">8,400,000</div>
<div class="a" style="left:992.8px;top:455px;font-size:12px;color:#222;">Đã lập</div>
<div class="a" style="left:1100.9px;top:455px;font-size:12.3px;color:#1f7fc4;">Thu tiền</div>
<svg class="a" style="left:1158px;top:459px;" width="9" height="5" viewBox="0 0 9 5" fill="#777" stroke="none" stroke-width="1.5" stroke-linecap="round" stroke-linejoin="round"><path d="M0 0 H9 L4.5 5 Z"/></svg>
<div class="a" style="left:199px;top:508.5px;width:990px;height:1px;background:#eeeff2"></div>
<div class="a" style="left:219px;top:487px;width:13px;height:13px;border:1.5px solid #a9a9a9;border-radius:2.5px"></div>
<div class="a" style="left:149.5px;width:300px;text-align:center;top:486px;font-size:13px;color:#222;letter-spacing:0.15px">06/05/2024</div>
<div class="a" style="left:372.6px;top:486px;font-size:13px;color:#1f7fc4;letter-spacing:-0.05px">BH00020</div>
<div class="a" style="left:470.3px;top:486px;font-size:13px;color:#1f7fc4;letter-spacing:0.15px">00000009</div>
<div class="a" style="left:568.5px;top:487px;font-size:12.2px;color:#222;">Công ty Cổ phần Thương mại Chiaki</div>
<div class="a" style="right:252.79999999999995px;top:486px;font-size:13px;color:#222;letter-spacing:0.15px">1,250,000</div>
<div class="a" style="left:992.8px;top:487px;font-size:12px;color:#222;">Đã lập</div>
<div class="a" style="left:1100.9px;top:487px;font-size:12.3px;color:#1f7fc4;">Thu tiền</div>
<svg class="a" style="left:1158px;top:491px;" width="9" height="5" viewBox="0 0 9 5" fill="#777" stroke="none" stroke-width="1.5" stroke-linecap="round" stroke-linejoin="round"><path d="M0 0 H9 L4.5 5 Z"/></svg>
<div class="a" style="left:199px;top:540.5px;width:990px;height:1px;background:#eeeff2"></div>
<div class="a" style="left:219px;top:519px;width:13px;height:13px;border:1.5px solid #a9a9a9;border-radius:2.5px"></div>
<div class="a" style="left:149.5px;width:300px;text-align:center;top:518px;font-size:13px;color:#222;letter-spacing:0.15px">10/06/2024</div>
<div class="a" style="left:372.6px;top:518px;font-size:13px;color:#1f7fc4;letter-spacing:-0.05px">BH00005</div>
<div class="a" style="left:470.3px;top:518px;font-size:13px;color:#1f7fc4;letter-spacing:0.15px">00000128</div>
<div class="a" style="left:568.5px;top:519px;font-size:12.2px;color:#222;">Công ty Cổ phần Transimex</div>
<div class="a" style="right:252.79999999999995px;top:518px;font-size:13px;color:#222;letter-spacing:0.15px">55,800,000</div>
<div class="a" style="left:992.8px;top:519px;font-size:12px;color:#222;">Đã lập</div>
<div class="a" style="left:1100.9px;top:519px;font-size:12.3px;color:#1f7fc4;">Thu tiền</div>
<svg class="a" style="left:1158px;top:523px;" width="9" height="5" viewBox="0 0 9 5" fill="#777" stroke="none" stroke-width="1.5" stroke-linecap="round" stroke-linejoin="round"><path d="M0 0 H9 L4.5 5 Z"/></svg>
<div class="a" style="left:199px;top:572.5px;width:990px;height:1px;background:#eeeff2"></div>
<div class="a" style="left:219px;top:551px;width:13px;height:13px;border:1.5px solid #a9a9a9;border-radius:2.5px"></div>
<div class="a" style="left:149.5px;width:300px;text-align:center;top:550px;font-size:13px;color:#222;letter-spacing:0.15px">22/08/2024</div>
<div class="a" style="left:372.6px;top:550px;font-size:13px;color:#1f7fc4;letter-spacing:-0.05px">BH00001</div>
<div class="a" style="left:470.3px;top:550px;font-size:13px;color:#1f7fc4;letter-spacing:0.15px">00000298</div>
<div class="a" style="left:568.5px;top:551px;font-size:12.2px;color:#222;">Công ty Cổ phần Gemadept</div>
<div class="a" style="right:252.79999999999995px;top:550px;font-size:13px;color:#222;letter-spacing:0.15px">5,600,000</div>
<div class="a" style="left:992.8px;top:551px;font-size:12px;color:#222;">Đã lập</div>
<div class="a" style="left:1100.9px;top:551px;font-size:12.3px;color:#1f7fc4;">Thu tiền</div>
<svg class="a" style="left:1158px;top:555px;" width="9" height="5" viewBox="0 0 9 5" fill="#777" stroke="none" stroke-width="1.5" stroke-linecap="round" stroke-linejoin="round"><path d="M0 0 H9 L4.5 5 Z"/></svg>
<div class="a" style="left:199px;top:573px;width:990px;height:32px;background:#f2f3f6"></div>
<div class="a" style="left:199px;top:604.5px;width:990px;height:1.5px;background:#dfe0e4"></div>
<div class="a" style="right:252.79999999999995px;top:583px;font-size:13.4px;color:#1f1f1f;font-weight:bold;">168,950,000</div>
<div class="a" style="left:199px;top:625px;font-size:12.4px;color:#606060;">Tổng số: <b style="color:#222">10</b> bản ghi</div>
<div class="a" style="left:838px;top:617px;width:156px;height:28px;border:1px solid #d5d6da;border-radius:3px"></div>
<div class="a" style="left:849.4px;top:625px;font-size:12.4px;color:#222;">50 bản ghi trên trang</div>
<svg class="a" style="left:976px;top:628px;" width="8" height="5" viewBox="0 0 8 5" fill="none" stroke="#666" stroke-width="1" stroke-linecap="round" stroke-linejoin="round"><path d="M0.5 0.5 L4 4 L7.5 0.5"/></svg>
<div class="a" style="left:1008.6px;top:625px;font-size:12px;color:#888;letter-spacing:-0.42px">Trước</div>
<div class="a" style="left:1051px;top:617px;width:29px;height:28px;border:1px solid #d5d6da;border-radius:3px"></div>
<div class="a" style="left:915.5px;width:300px;text-align:center;top:625px;font-size:12.5px;color:#222;font-weight:bold;">1</div>
<div class="a" style="left:944.7px;width:300px;text-align:center;top:625px;font-size:12.5px;color:#333;">2</div>
<div class="a" style="left:963.5999999999999px;width:300px;text-align:center;top:625px;font-size:12.5px;color:#333;">3</div>
<div class="a" style="left:982.5999999999999px;width:300px;text-align:center;top:625px;font-size:12.5px;color:#333;">...</div>
<div class="a" style="left:1002px;width:300px;text-align:center;top:625px;font-size:12.5px;color:#333;">5</div>
<div class="a" style="left:1167.5px;top:625px;font-size:12px;color:#222;letter-spacing:-0.28px">Sau</div>
<svg class="a" style="left:1020px;top:38px;z-index:30" width="100" height="65" viewBox="1020 38 100 65">
  <defs><filter id="sh" x="-30%" y="-30%" width="160%" height="160%"><feGaussianBlur stdDeviation="1.5"/></filter></defs>
  <g transform="translate(-0.5,3)" opacity="0.5" filter="url(#sh)"><path d="M1108.3 92.8 L1042 50" stroke="#333" stroke-width="4.3" stroke-linecap="round"/><path d="M1034 44.8 L1047.5 46.3 L1040 56 Z" fill="#333"/></g>
  <path d="M1108.3 92.8 L1042 50" stroke="#e8453f" stroke-width="4.3" stroke-linecap="round"/>
  <path d="M1034 44.8 L1047.5 46.3 L1040 56 Z" fill="#e8453f" stroke="#e8453f" stroke-width="0.6" stroke-linejoin="round"/>
</svg>
<div class="a" style="left:0px;top:0px;width:1217px;height:683px;border:1px solid #d2d2d2;z-index:50"></div>
</div></body></html>
